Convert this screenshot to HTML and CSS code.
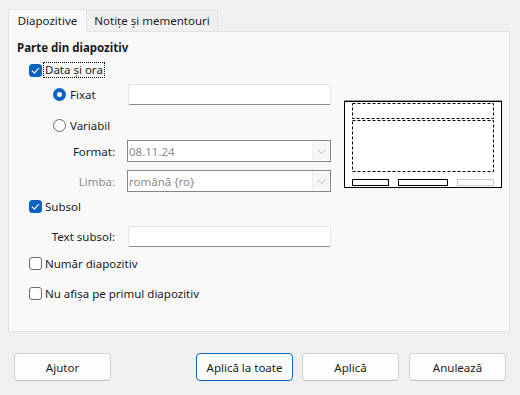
FILE: index.html
```html
<!DOCTYPE html>
<html lang="ro">
<head>
<meta charset="utf-8">
<link rel="stylesheet" href="styles.css">
</head>
<body>
<div class="dialog">
  <div class="tabs">
    <div class="tab active">Diapozitive</div>
    <div class="tab">Notițe și mementouri</div>
  </div>
  <div class="panel">
    <div class="col">
      <div class="row heading">Parte din diapozitiv</div>
      <div class="row r-data check-row">
        <span class="cb checked"><svg width="9" height="7" viewBox="0 0 9 7"><path d="M1 3.6 L3.4 6 L8 1.2" fill="none" stroke="#fff" stroke-width="1.1"/></svg></span>
        <span class="focus">Data și ora</span>
      </div>
      <div class="row r-fixat radio-row">
        <span class="rb on"></span><span class="rlabel">Fixat</span>
        <span class="input"></span>
      </div>
      <div class="row r-var radio-row">
        <span class="rb"></span><span class="rlabel">Variabil</span>
      </div>
      <div class="row r-format field-row">
        <span class="flabel">Format:</span>
        <span class="select"><span class="sval">08.11.24</span><span class="sbtn"><svg width="9" height="5" viewBox="0 0 9 5"><path d="M0.5 0.5 L4.5 4.5 L8.5 0.5" fill="none" stroke="#b8b8b8" stroke-width="1"/></svg></span></span>
      </div>
      <div class="row r-limba field-row">
        <span class="flabel dis">Limba:</span>
        <span class="select"><span class="sval">română {ro}</span><span class="sbtn"><svg width="9" height="5" viewBox="0 0 9 5"><path d="M0.5 0.5 L4.5 4.5 L8.5 0.5" fill="none" stroke="#b8b8b8" stroke-width="1"/></svg></span></span>
      </div>
      <div class="row r-subsol check-row">
        <span class="cb checked"><svg width="9" height="7" viewBox="0 0 9 7"><path d="M1 3.6 L3.4 6 L8 1.2" fill="none" stroke="#fff" stroke-width="1.1"/></svg></span>
        <span class="clabel">Subsol</span>
      </div>
      <div class="row r-text field-row">
        <span class="flabel">Text subsol:</span>
        <span class="input"></span>
      </div>
      <div class="row r-numar check-row">
        <span class="cb"></span><span class="clabel">Număr diapozitiv</span>
      </div>
      <div class="row r-nu check-row">
        <span class="cb"></span><span class="clabel">Nu afișa pe primul diapozitiv</span>
      </div>
    </div>
    <div class="preview">
      <svg width="158" height="88" viewBox="0 0 158 88">
        <rect x="0" y="0" width="158" height="88" fill="#fff"/>
        <line x1="0" y1="0.5" x2="158" y2="0.5" stroke="#9a9a9a"/>
        <rect x="0.5" y="1.5" width="157" height="86" fill="none" stroke="#000"/>
        <rect x="8.5" y="3.5" width="141" height="15" fill="none" stroke="#000" stroke-dasharray="3 2"/>
        <rect x="8.5" y="20.5" width="141" height="51" fill="none" stroke="#000" stroke-dasharray="3 2"/>
        <rect x="8.5" y="79.5" width="36" height="6" fill="none" stroke="#000"/>
        <rect x="54.5" y="79.5" width="49" height="6" fill="none" stroke="#000"/>
        <rect x="113.5" y="79.5" width="36" height="6" fill="none" stroke="#c8c8c8"/>
      </svg>
    </div>
  </div>
  <div class="footer">
    <button class="btn">Ajutor</button>
    <span class="spacer"></span>
    <button class="btn default">Aplică la toate</button>
    <button class="btn">Aplică</button>
    <button class="btn last">Anulează</button>
  </div>
</div>
</body>
</html>
```
FILE: styles.css
```css
html, body {
  margin: 0;
  padding: 0;
  background: #f0f0f0;
}
body {
  font-family: "Noto Sans", "Open Sans", sans-serif;
  font-size: 11.5px;
  color: #1b1b1b;
  width: 520px;
  height: 395px;
  overflow: hidden;
}
.dialog {
  padding: 9px 10px 0 8px;
}
.tabs {
  display: flex;
  height: 22px;
  align-items: flex-end;
}
.tab {
  height: 21px;
  box-sizing: border-box;
  border: 1px solid #e3e3e3;
  border-bottom: none;
  background: #f0f0f0;
  display: flex;
  align-items: center;
  justify-content: center;
  padding-bottom: 1px;
}
.tab.active {
  width: 79px;
  height: 23px;
  background: #f9f9f9;
  position: relative;
  top: 1px;
}
.tab:not(.active) {
  width: 131px;
  border-left: none;
}
.panel {
  height: 301px;
  box-sizing: border-box;
  border: 1px solid #e3e3e3;
  background: #f9f9f9;
  display: flex;
  padding: 0 8px;
}
.col {
  width: 314px;
  flex: none;
  display: flex;
  flex-direction: column;
}
.row {
  display: flex;
  align-items: center;
}
.heading {
  font-weight: bold;
  height: 16px;
  margin-top: 7px;
}
.check-row { height: 16px; padding-left: 12px; }
.radio-row { height: 21px; padding-left: 36px; }
.field-row { height: 21px; }
.r-data { margin-top: 7px; }
.r-fixat { margin-top: 6px; }
.r-var { margin-top: 10px; }
.r-format { margin-top: 4px; height: 22px; }
.r-limba { margin-top: 8px; height: 22px; }
.r-subsol { margin-top: 6px; }
.r-text { margin-top: 12px; }
.r-numar { margin-top: 8px; }
.r-nu { margin-top: 14px; }

.cb {
  width: 13px;
  height: 13px;
  box-sizing: border-box;
  border: 1px solid #6b6b6b;
  border-radius: 3px;
  background: #fdfdfd;
  display: flex;
  align-items: center;
  justify-content: center;
  flex: none;
}
.cb.checked {
  background: #0a64c0;
  border-color: #0a64c0;
}
.clabel { margin-left: 3px; }
.focus {
  margin-left: 2px;
  padding: 0 1px;
  line-height: 14px;
  outline: 1px dotted #111;
}
.rb {
  width: 13px;
  height: 13px;
  box-sizing: border-box;
  border: 1px solid #6b6b6b;
  border-radius: 50%;
  background: #fdfdfd;
  flex: none;
}
.rb.on {
  border: 4px solid #0a64c0;
  background: #fff;
}
.rlabel {
  margin-left: 4px;
  width: 58px;
}
.input {
  width: 203px;
  height: 21px;
  box-sizing: border-box;
  background: #fff;
  border: 1px solid #e5e5e5;
  border-bottom: 1px solid #8a8a8a;
  border-radius: 2px;
}
.flabel {
  width: 98px;
  text-align: right;
  margin-right: 12px;
}
.flabel.dis { color: #8e8e8e; }
.field-row .input { margin-left: 1px; }
.select {
  width: 204px;
  height: 22px;
  box-sizing: border-box;
  border: 1px solid #858585;
  background: #fff;
  display: flex;
  align-items: center;
  color: #8a8a8a;
}
.sval { flex: 1; padding-left: 1px; }
.sbtn {
  width: 16px;
  height: 18px;
  margin-right: 1px;
  background: #f6f6f6;
  border-left: 1px solid #ececec;
  display: flex;
  align-items: center;
  justify-content: center;
}
.preview {
  margin-top: 68px;
  margin-left: 13px;
  width: 158px;
  height: 88px;
  flex: none;
}
.preview svg { display: block; }
.footer {
  display: flex;
  margin-top: 21px;
  padding-left: 6px;
  gap: 9px;
  height: 28px;
}
.spacer { width: 67px; flex: none; }
.btn {
  width: 97px;
  flex: none;
  height: 28px;
  box-sizing: border-box;
  border: 1px solid #d3d3d3;
  border-bottom-color: #c2c2c2;
  border-radius: 4px;
  background: #fdfdfd;
  font-family: inherit;
  font-size: 11.5px;
  color: #1b1b1b;
  padding: 0;
}
.btn.last { margin-left: 1px; }
.btn.default {
  border-color: #0a64c0;
}
```
